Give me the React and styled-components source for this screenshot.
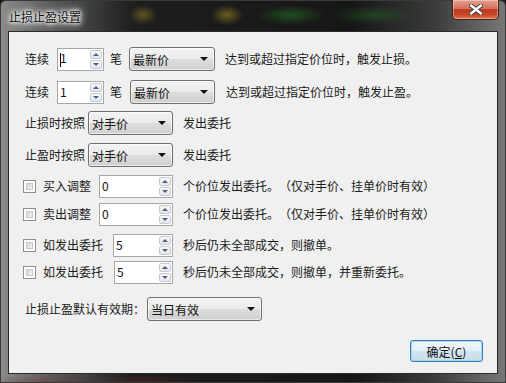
import React from 'react';
import styled, { createGlobalStyle } from 'styled-components';

const GlobalStyle = createGlobalStyle`
  html, body {
    margin: 0;
    padding: 0;
    background: #1b1b1b;
  }
  body {
    font-family: "Microsoft YaHei", "Noto Sans CJK SC", "Noto Sans", sans-serif;
    font-size: 12px;
    color: #1a1a1a;
    text-spacing-trim: space-all;
  }
`;

const Frame = styled.div`
  width: 506px;
  height: 383px;
  box-sizing: border-box;
  display: flex;
  flex-direction: column;
  padding: 0 7px 8px 7px;
  background:
    radial-gradient(ellipse 14px 10px at 142px 14px, rgba(150, 130, 40, 0.55), transparent),
    radial-gradient(ellipse 16px 10px at 226px 14px, rgba(170, 150, 40, 0.55), transparent),
    radial-gradient(ellipse 34px 10px at 290px 14px, rgba(40, 120, 40, 0.55), transparent),
    radial-gradient(ellipse 40px 10px at 372px 14px, rgba(40, 110, 40, 0.45), transparent),
    radial-gradient(ellipse 60px 6px at 40px 380px, rgba(120, 40, 40, 0.35), transparent),
    radial-gradient(ellipse 60px 6px at 140px 380px, rgba(120, 40, 40, 0.35), transparent),
    linear-gradient(90deg, #8a8b8b 0%, #5a5b5b 10%, #1e1e1e 26%, #161616 70%, #3a3b3b 86%, #777878 100%);
  border: 1px solid #3a3a3a;
  border-radius: 6px 6px 0 0;
`;

const TitleBar = styled.div`
  height: 30px;
  flex: none;
  display: flex;
  align-items: flex-start;
  justify-content: space-between;
`;

const Title = styled.div`
  margin-top: 7px;
  margin-left: 1px;
  font-size: 12px;
  color: #111;
  text-shadow: 0 0 5px #fff, 0 0 7px #fff, 0 0 3px #fff, 0 0 10px #ddd;
`;

const CloseButton = styled.div`
  width: 45px;
  height: 19px;
  margin-top: -1px;
  margin-right: -1px;
  display: flex;
  align-items: center;
  justify-content: center;
  border: 1px solid #4a1e18;
  border-top: none;
  border-radius: 0 0 5px 5px;
  background: linear-gradient(180deg, #e6a08e 0%, #d4725c 45%, #c0381c 50%, #c84a2a 80%, #e07a58 100%);
  box-shadow: inset 0 0 0 1px rgba(255, 255, 255, 0.35);
`;

const Client = styled.div`
  flex: 1;
  display: flex;
  flex-direction: column;
  background: #f0f0f0;
  border: 1px solid #2a2a2a;
  padding: 15px 0 0 15px;
  box-sizing: border-box;
`;

const Row = styled.div`
  height: 24px;
  display: flex;
  align-items: center;
  margin-top: ${(p) => p.$mt || 0}px;
  white-space: nowrap;
`;

const Label = styled.span`
  margin-left: ${(p) => p.$ml || 0}px;
  line-height: 14px;
`;

const Combo = styled.div`
  width: ${(p) => p.$w}px;
  height: 24px;
  margin-left: ${(p) => p.$ml || 0}px;
  box-sizing: border-box;
  display: flex;
  align-items: center;
  justify-content: space-between;
  padding: 0 6px 0 3px;
  border: 1px solid #707070;
  border-radius: 3px;
  background: linear-gradient(180deg, #f2f2f2 0%, #ebebeb 48%, #dddddd 52%, #cfcfcf 100%);
  box-shadow: inset 0 0 0 1px rgba(255, 255, 255, 0.6);
  color: #111;
`;

const Arrow = styled.span`
  width: 0;
  height: 0;
  border-left: 4px solid transparent;
  border-right: 4px solid transparent;
  border-top: 4px solid #111;
`;

const Spinner = styled.div`
  width: ${(p) => p.$w}px;
  height: 23px;
  margin-left: ${(p) => p.$ml || 0}px;
  box-sizing: border-box;
  display: flex;
  align-items: center;
  justify-content: space-between;
  border: 1px solid #a6a6a6;
  background: #fff;
  padding: 0 1px 0 2px;
`;

const Value = styled.span`
  color: #111;
  line-height: 14px;
`;

const Caret = styled.span`
  display: inline-block;
  width: 1px;
  height: 14px;
  background: #000;
  vertical-align: middle;
  margin-right: -1px;
`;

const SpinButtons = styled.div`
  display: flex;
  flex-direction: column;
  gap: 1px;
  width: 12px;
  align-self: stretch;
  padding: 1px 0;
  box-sizing: border-box;
`;

const SpinButton = styled.div`
  flex: 1;
  display: flex;
  align-items: center;
  justify-content: center;
  border: 1px solid #c6cad2;
  border-radius: 2px;
  background: linear-gradient(180deg, #f6f7f9 0%, #e4e7ec 100%);
`;

const SpinArrow = styled.span`
  width: 0;
  height: 0;
  border-left: 3px solid transparent;
  border-right: 3px solid transparent;
  ${(p) => (p.$down ? 'border-top: 3px solid #4d6185;' : 'border-bottom: 3px solid #4d6185;')}
`;

const Check = styled.span`
  width: 13px;
  height: 13px;
  box-sizing: border-box;
  margin-left: -1px;
  border: 1px solid #8e8f8f;
  background: #fff;
  display: flex;
  padding: 2px;
  &::after {
    content: '';
    flex: 1;
    border: 1px solid #c9c9c9;
    background: linear-gradient(135deg, #d6d6d6 0%, #f2f2f2 100%);
  }
`;

const Footer = styled.div`
  flex: 1;
  display: flex;
  justify-content: flex-end;
  align-items: flex-end;
  padding: 0 14px 11px 0;
`;

const Button = styled.div`
  width: 73px;
  height: 22px;
  box-sizing: border-box;
  display: flex;
  align-items: center;
  justify-content: center;
  border: 1px solid #3c7fb1;
  border-radius: 3px;
  background: linear-gradient(180deg, #f1f7fb 0%, #e3eff8 48%, #d2e4f1 52%, #c8dcea 100%);
  box-shadow: inset 0 0 0 1px #9ed8f7;
  color: #111;
  u { text-decoration: underline; }
`;

const Spin = ({ w, ml, value, caret }) => (
  <Spinner $w={w} $ml={ml}>
    <Value>
      {caret && <Caret />}
      {value}
    </Value>
    <SpinButtons>
      <SpinButton><SpinArrow /></SpinButton>
      <SpinButton><SpinArrow $down /></SpinButton>
    </SpinButtons>
  </Spinner>
);

const Select = ({ w, ml, value }) => (
  <Combo $w={w} $ml={ml}>
    <span>{value}</span>
    <Arrow />
  </Combo>
);

const CloseIcon = () => (
  <svg width="16" height="11" viewBox="0 0 16 11">
    <path d="M3 1.5 L13 9.5 M13 1.5 L3 9.5" stroke="#3a3a3a" strokeWidth="4.2" strokeLinecap="round" />
    <path d="M3 1.5 L13 9.5 M13 1.5 L3 9.5" stroke="#ffffff" strokeWidth="2.4" strokeLinecap="round" />
  </svg>
);

const App = () => (
  <>
    <GlobalStyle />
    <Frame>
      <TitleBar>
        <Title>止损止盈设置</Title>
        <CloseButton><CloseIcon /></CloseButton>
      </TitleBar>
      <Client>
        <Row>
          <Label $ml={1}>连续</Label>
          <Spin w={47} ml={8} value="1" caret />
          <Label $ml={6}>笔</Label>
          <Select w={86} ml={7} value="最新价" />
          <Label $ml={10}>达到或超过指定价位时，触发止损。</Label>
        </Row>
        <Row $mt={9}>
          <Label $ml={1}>连续</Label>
          <Spin w={47} ml={8} value="1" />
          <Label $ml={6}>笔</Label>
          <Select w={85} ml={8} value="最新价" />
          <Label $ml={11}>达到或超过指定价位时，触发止盈。</Label>
        </Row>
        <Row $mt={7}>
          <Label $ml={1}>止损时按照</Label>
          <Select w={85} ml={3} value="对手价" />
          <Label $ml={10}>发出委托</Label>
        </Row>
        <Row $mt={8}>
          <Label $ml={1}>止盈时按照</Label>
          <Select w={85} ml={3} value="对手价" />
          <Label $ml={10}>发出委托</Label>
        </Row>
        <Row $mt={7}>
          <Check />
          <Label $ml={7}>买入调整</Label>
          <Spin w={74} ml={8} value="0" />
          <Label $ml={10}>个价位发出委托。（仅对手价、挂单价时有效）</Label>
        </Row>
        <Row $mt={4}>
          <Check />
          <Label $ml={7}>卖出调整</Label>
          <Spin w={74} ml={8} value="0" />
          <Label $ml={10}>个价位发出委托。（仅对手价、挂单价时有效）</Label>
        </Row>
        <Row $mt={7}>
          <Check />
          <Label $ml={7}>如发出委托</Label>
          <Spin w={60} ml={10} value="5" />
          <Label $ml={10}>秒后仍未全部成交，则撤单。</Label>
        </Row>
        <Row $mt={3}>
          <Check />
          <Label $ml={7}>如发出委托</Label>
          <Spin w={59} ml={11} value="5" />
          <Label $ml={10}>秒后仍未全部成交，则撤单，并重新委托。</Label>
        </Row>
        <Row $mt={13}>
          <Label $ml={1}>止损止盈默认有效期：</Label>
          <Select w={115} ml={2} value="当日有效" />
        </Row>
        <Footer>
          <Button>确定(<u>C</u>)</Button>
        </Footer>
      </Client>
    </Frame>
  </>
);

export default App;
